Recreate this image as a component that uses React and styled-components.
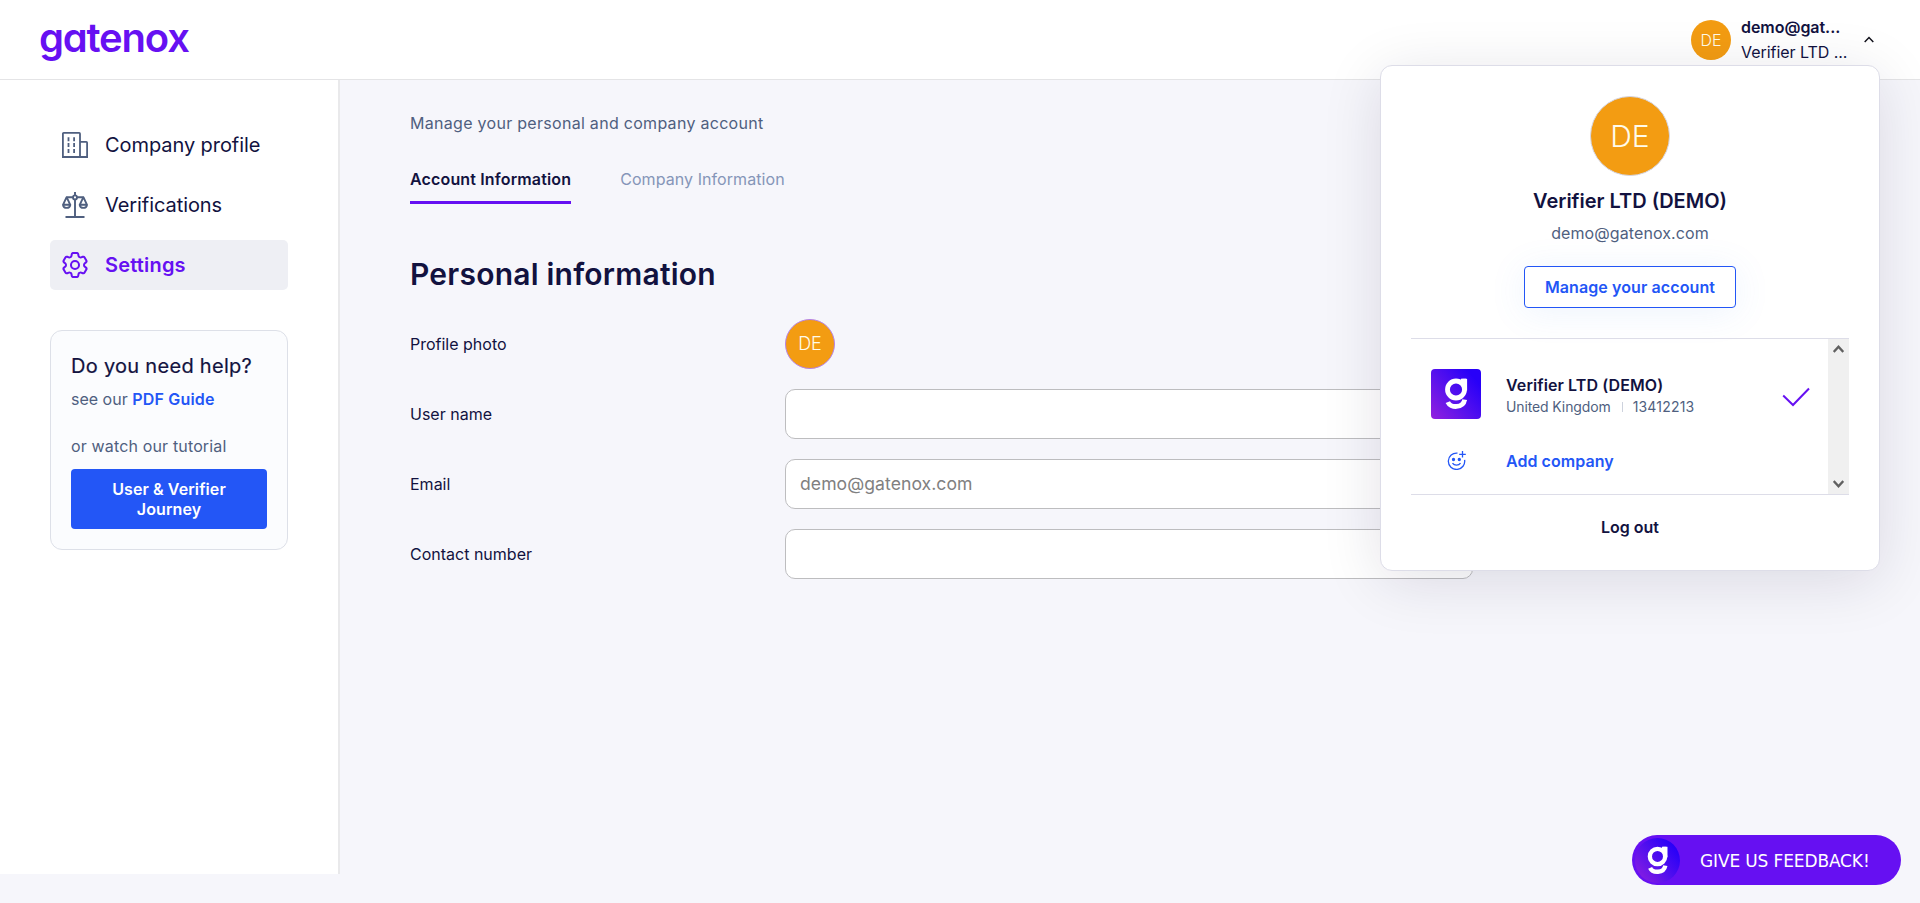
import React from "react";
import styled, { createGlobalStyle, css } from "styled-components";
import { HiOutlineCog6Tooth } from "react-icons/hi2";

const color = {
  ink: "#12123f",
  slate: "#4f5f7f",
  muted: "#8595b8",
  purple: "#6610f2",
  blue: "#2356f6",
  orange: "#f39c12",
  page: "#f6f6fb",
  line: "#dddde8",
};

const GlobalStyle = createGlobalStyle`
  *, *::before, *::after { box-sizing: border-box; }
  body {
    margin: 0;
    background: ${color.page};
    color: ${color.ink};
    font-family: Inter, "Liberation Sans", sans-serif;
    font-size: 16px;
    line-height: 24px;
    overflow: hidden;
  }
`;

const Page = styled.div`
  position: relative;
  height: 903px;
`;

/* Header */
const Header = styled.header`
  display: flex;
  align-items: center;
  justify-content: space-between;
  height: 80px;
  padding: 0 46px 0 39px;
  background: #fff;
  border-bottom: 1px solid #e4e4e6;
`;

const Wordmark = styled.div`
  color: ${color.purple};
  font-size: 40px;
  font-weight: 600;
  line-height: 48px;
  letter-spacing: -1.2px;
  font-feature-settings: "cv11";
  padding-bottom: 3px;
`;

const UserMenu = styled.div`
  display: flex;
  align-items: center;
`;

const UserText = styled.div`
  width: 133px;
  padding-left: 10px;
  line-height: 25px;
  padding-top: 1px;
`;

const UserLine = styled.div`
  font-weight: ${(p) => (p.$strong ? 600 : 400)};
  letter-spacing: -0.04px;
  white-space: nowrap;
`;

const CaretCell = styled.span`
  display: flex;
`;

const Avatar = styled.div`
  display: flex;
  align-items: center;
  justify-content: center;
  flex: none;
  width: ${(p) => p.$size}px;
  height: ${(p) => p.$size}px;
  border-radius: 50%;
  background: ${color.orange};
  border: ${(p) => (p.$ring ? `1px solid ${p.$ring}` : "0")};
  color: #fffbea;
  font-size: ${(p) => p.$font}px;
  font-weight: 300;
`;

/* Side bar */
const Body = styled.div`
  display: flex;
  height: 794px;
`;

const Sidebar = styled.aside`
  width: 340px;
  padding: 40px 50px;
  background: #fff;
  border-right: 2px solid #e9e9eb;
`;

const Nav = styled.nav`
  display: flex;
  flex-direction: column;
  gap: 10px;
  width: 238px;
`;

const NavItem = styled.a`
  display: flex;
  align-items: center;
  gap: 17px;
  height: 50px;
  padding: 0 12px;
  border-radius: 5px;
  font-size: 20px;
  letter-spacing: -0.07px;
  color: ${color.ink};
  ${(p) =>
    p.$active &&
    css`
      background: #eeeff4;
      color: ${color.purple};
      font-weight: 600;
      letter-spacing: 0.18px;
    `}
  svg {
    flex: none;
    color: ${(p) => (p.$active ? color.purple : color.slate)};
  }
`;

const HelpCard = styled.section`
  width: 238px;
  margin-top: 40px;
  padding: 20px;
  border: 1px solid #dde0e8;
  border-radius: 12px;
  background: #fbfcfe;
`;

const HelpTitle = styled.h2`
  margin: 0;
  font-size: 20px;
  line-height: 30px;
  font-weight: 400;
  letter-spacing: 0.29px;
  -webkit-text-stroke: 0.2px ${color.ink};
`;

const HelpText = styled.p`
  margin: ${(p) => (p.$second ? "23px 0 11px" : "6px 0 0")};
  color: ${color.slate};
  letter-spacing: ${(p) => (p.$second ? 0.15 : 0)}px;
`;

const PdfLink = styled.a`
  color: ${color.blue};
  font-weight: 600;
  letter-spacing: 0.2px;
`;

const JourneyButton = styled.button`
  display: block;
  width: 196px;
  height: 60px;
  padding: 10px 24px;
  border: 0;
  border-radius: 4px;
  background: ${color.blue};
  color: #fff;
  font: 600 16px/20px Inter, "Liberation Sans", sans-serif;
  letter-spacing: 0.1px;
`;

/* Main column */
const Main = styled.main`
  padding: 31px 70px 0;
`;

const Intro = styled.p`
  margin: 0;
  color: ${color.slate};
  letter-spacing: 0.29px;
`;

const Tabs = styled.div`
  display: flex;
  gap: 49px;
  margin-top: 32px;
`;

const Tab = styled.a`
  height: 37px;
  color: ${(p) => (p.$active ? color.ink : color.muted)};
  font-weight: ${(p) => (p.$active ? 600 : 400)};
  letter-spacing: ${(p) => (p.$active ? 0.15 : 0.07)}px;
  border-bottom: 3px solid ${(p) => (p.$active ? color.purple : "transparent")};
`;

const Heading = styled.h1`
  margin: 50px 0 25px;
  font-size: 30px;
  line-height: 40px;
  font-weight: 600;
  letter-spacing: 0.22px;
`;

const Form = styled.div`
  display: flex;
  flex-direction: column;
  gap: 20px;
`;

const Field = styled.div`
  display: grid;
  grid-template-columns: 375px 688px;
  align-items: center;
  height: 50px;
`;

const Input = styled.input`
  width: 688px;
  height: 50px;
  padding: 0 14px 2px;
  border: 1px solid #bdbdbf;
  border-radius: 10px;
  background: #fff;
  font: 400 17.6px Inter, "Liberation Sans", sans-serif;
  letter-spacing: 0.05px;
  color: ${color.ink};
  &::placeholder {
    color: #808080;
    opacity: 1;
  }
`;

/* Account pop-up */
const Popup = styled.div`
  position: absolute;
  top: 65px;
  right: 40px;
  width: 500px;
  height: 506px;
  padding: 30px 30px 0;
  display: flex;
  flex-direction: column;
  align-items: center;
  background: #fff;
  border: 1px solid ${color.line};
  border-radius: 12px;
  box-shadow: 0 10px 60px rgba(25, 15, 50, 0.12);
`;

const PopupTitle = styled.div`
  margin-top: 9px;
  font-size: 20px;
  line-height: 32px;
  font-weight: 600;
`;

const PopupEmail = styled.div`
  margin-top: 4px;
  color: ${color.slate};
  letter-spacing: 0.09px;
`;

const ManageButton = styled.button`
  flex: none;
  width: 212px;
  height: 42px;
  margin-top: 21px;
  padding: 0;
  border: 1px solid ${color.blue};
  border-radius: 4px;
  background: #fff;
  color: ${color.blue};
  font: 600 16px Inter, "Liberation Sans", sans-serif;
  letter-spacing: 0.1px;
  box-shadow: 0 4px 36px rgba(80, 150, 240, 0.1);
`;

const ListFrame = styled.div`
  flex: none;
  display: flex;
  width: 438px;
  height: 157px;
  margin-top: 30px;
  border-top: 1px solid ${color.line};
  border-bottom: 1px solid ${color.line};
`;

const List = styled.div`
  flex: 1;
  padding: 30px 18px 0 20px;
`;

const ScrollTrack = styled.div`
  display: flex;
  flex-direction: column;
  align-items: center;
  justify-content: space-between;
  width: 21px;
  padding: 5px 0;
  background: #f0f0f0;
`;

const CompanyRow = styled.div`
  display: flex;
  align-items: center;
`;

const CompanyText = styled.div`
  flex: 1;
  padding: 4px 0 0 25px;
`;

const CheckCell = styled.span`
  display: flex;
  padding-top: 5px;
`;

const CompanyName = styled.div`
  font-weight: 600;
  line-height: 22px;
  letter-spacing: 0.1px;
`;

const CompanyMeta = styled.div`
  display: flex;
  align-items: center;
  font-size: 14px;
  line-height: 22px;
  color: ${color.slate};
  letter-spacing: -0.12px;
`;

const Divider = styled.span`
  width: 1px;
  height: 10px;
  margin: 0 10px 0 11px;
  background: #cdd2dd;
`;

const CompanyNumber = styled.span`
  letter-spacing: 0.2px;
`;

const AddRow = styled.a`
  display: flex;
  align-items: center;
  margin-top: 30px;
  color: ${color.blue};
  font-weight: 600;
  letter-spacing: 0.05px;
`;

const AddIconCell = styled.span`
  display: flex;
  justify-content: center;
  width: 50px;
  margin-right: 25px;
  padding-bottom: 2px;
`;

const LogOut = styled.a`
  margin-top: 20px;
  font-weight: 600;
`;

/* Feedback button */
const Feedback = styled.div`
  position: absolute;
  right: 19px;
  bottom: 18px;
  display: flex;
  align-items: center;
  width: 269px;
  height: 50px;
  padding-left: 3px;
  border-radius: 25px;
  background: ${color.purple};
  color: #fff;
  font-family: "DejaVu Sans", Verdana, sans-serif;
  font-size: 17px;
  letter-spacing: -0.13px;
  white-space: nowrap;
`;

const FeedbackLabel = styled.span`
  padding: 2px 0 0 20px;
`;

const BuildingIcon = () => (
  <svg width="26" height="26" viewBox="0 0 26 26" fill="none" stroke="currentColor" strokeWidth="1.8">
    <path d="M.9 25V1.700Q.9.900 1.700.9H17.200Q18 .9 18 1.700V25M18 9.900H24.300Q25.100 9.900 25.100 10.700V25M0 25H26" />
    <path d="M6.500 5.200v4M12.100 5.200v4M6.500 11v4M12.100 11v4M6.500 17v4M12.100 17v4" />
  </svg>
);

const ScaleIcon = () => (
  <svg width="26" height="26" viewBox="0 0 26 26" fill="none" stroke="currentColor" strokeWidth="1.9">
    <path d="M13 0v3.300M13 7.500V25M3.500 25h19M4 5.200h6.900M15.100 5.200h6.900" />
    <circle cx="13" cy="5.400" r="2" />
    <path d="M4.600 5.200 1 12.800a3.700 3.700 0 0 0 7.300 0L4.600 5.200M.6 12.800h8.100" />
    <path d="M21.400 5.200 17.700 12.800a3.700 3.700 0 0 0 7.300 0L21.400 5.200M17.300 12.800h8.100" />
  </svg>
);

const GMark = ({ size, round, id }) => (
  <svg width={size} height={size} viewBox="0 0 50 50" fill="none">
    <defs>
      <linearGradient id={id} x1="0" y1="50" x2="46" y2="12" gradientUnits="userSpaceOnUse">
        <stop offset="0" stopColor="#9320de" />
        <stop offset=".5" stopColor="#5a12ec" />
        <stop offset="1" stopColor="#2800f8" />
      </linearGradient>
    </defs>
    <rect width="50" height="50" rx={round ? 25 : 4} fill={`url(#${id})`} />
    <g stroke="#fff" strokeWidth="4.800">
      <circle cx="25" cy="20.500" r="8.500" />
      <path d="M33.700 9.800V21.500" />
      <path d="M30 12.100h5" />
      <path d="M16.800 33.100C19.400 39 32 39.700 33.700 30.600" />
    </g>
  </svg>
);

const CaretUp = () => (
  <svg width="10" height="7" viewBox="0 0 10 7" fill="none" stroke="#12121c" strokeWidth="1.5">
    <path d="M.7 5.900 5 1.500l4.300 4.400" />
  </svg>
);

const CheckIcon = () => (
  <svg width="28" height="20" viewBox="0 0 28 20" fill="none" stroke={color.purple} strokeWidth="2">
    <path d="M1.200 8.500 11 18 27 1.500" />
  </svg>
);

const SmilePlusIcon = () => (
  <svg width="19" height="19" viewBox="0 0 19 19" fill="none" stroke="currentColor" strokeWidth="1.300">
    <path d="M10.500 2.100A8.200 8.200 0 1 0 17.600 8.800M15.500 0v6.600M12.200 3.300h6.600" />
    <path d="M5.500 12.200c1.800 2.600 6.200 2.600 8 0" />
    <circle cx="6.500" cy="8.500" r="1" fill="currentColor" />
    <circle cx="12.300" cy="8.500" r="1" fill="currentColor" />
  </svg>
);

const ScrollArrow = ({ down }) => (
  <svg width="11" height="10" viewBox="0 0 11 10" fill="none" stroke="#606060" strokeWidth="2.400">
    <path d={down ? "M.7 2 5.500 7.200 10.300 2" : "M.7 8 5.500 2.800 10.300 8"} />
  </svg>
);

export default function App() {
  return (
    <Page>
      <GlobalStyle />
      <Header>
        <Wordmark>gatenox</Wordmark>
        <UserMenu>
          <Avatar $size={40} $font={16}>DE</Avatar>
          <UserText>
            <UserLine $strong>demo@gat...</UserLine>
            <UserLine>Verifier LTD ...</UserLine>
          </UserText>
          <CaretCell><CaretUp /></CaretCell>
        </UserMenu>
      </Header>

      <Body>
        <Sidebar>
          <Nav>
            <NavItem><BuildingIcon />Company profile</NavItem>
            <NavItem><ScaleIcon />Verifications</NavItem>
            <NavItem $active>
              <HiOutlineCog6Tooth size={26} viewBox="2.3 2.3 19.4 19.4" strokeWidth="1.5" />
              Settings
            </NavItem>
          </Nav>
          <HelpCard>
            <HelpTitle>Do you need help?</HelpTitle>
            <HelpText>see our <PdfLink>PDF Guide</PdfLink></HelpText>
            <HelpText $second>or watch our tutorial</HelpText>
            <JourneyButton>User &amp; Verifier Journey</JourneyButton>
          </HelpCard>
        </Sidebar>

        <Main>
          <Intro>Manage your personal and company account</Intro>
          <Tabs>
            <Tab $active>Account Information</Tab>
            <Tab>Company Information</Tab>
          </Tabs>
          <Heading>Personal information</Heading>
          <Form>
            <Field>
              Profile photo
              <Avatar $size={50} $font={18} $ring="#b583e8">DE</Avatar>
            </Field>
            <Field>User name<Input /></Field>
            <Field>Email<Input placeholder="demo@gatenox.com" /></Field>
            <Field>Contact number<Input /></Field>
          </Form>
        </Main>
      </Body>

      <Popup>
        <Avatar $size={80} $font={30} $ring="#d5d5e2">DE</Avatar>
        <PopupTitle>Verifier LTD (DEMO)</PopupTitle>
        <PopupEmail>demo@gatenox.com</PopupEmail>
        <ManageButton>Manage your account</ManageButton>
        <ListFrame>
          <List>
            <CompanyRow>
              <GMark size={50} id="tile" />
              <CompanyText>
                <CompanyName>Verifier LTD (DEMO)</CompanyName>
                <CompanyMeta>
                  United Kingdom
                  <Divider />
                  <CompanyNumber>13412213</CompanyNumber>
                </CompanyMeta>
              </CompanyText>
              <CheckCell><CheckIcon /></CheckCell>
            </CompanyRow>
            <AddRow>
              <AddIconCell><SmilePlusIcon /></AddIconCell>
              Add company
            </AddRow>
          </List>
          <ScrollTrack>
            <ScrollArrow />
            <ScrollArrow down />
          </ScrollTrack>
        </ListFrame>
        <LogOut>Log out</LogOut>
      </Popup>

      <Feedback>
        <GMark size={45} round id="badge" />
        <FeedbackLabel>GIVE US FEEDBACK!</FeedbackLabel>
      </Feedback>
    </Page>
  );
}
